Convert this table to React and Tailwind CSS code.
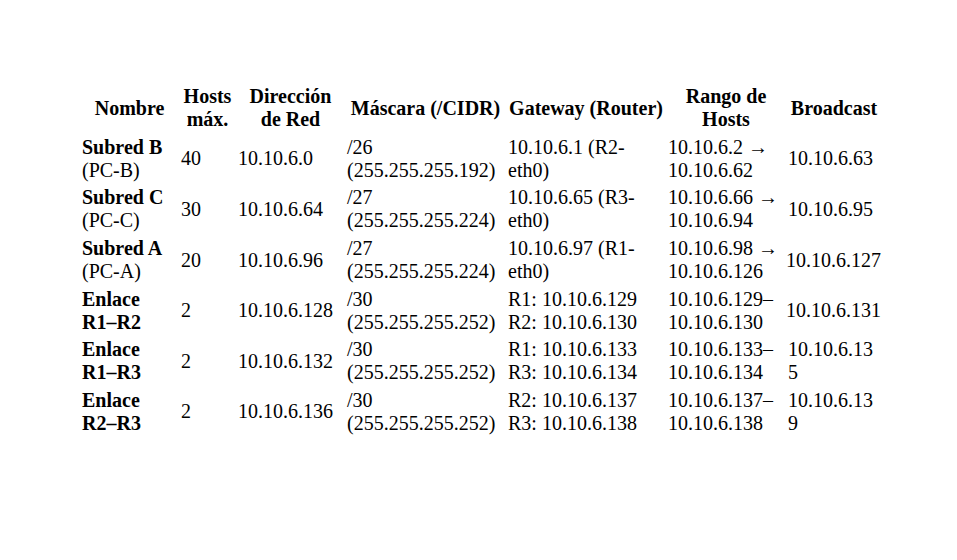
import React from "react";

const headers = [
  ["Nombre"],
  ["Hosts", "máx."],
  ["Dirección", "de Red"],
  ["Máscara (/CIDR)"],
  ["Gateway (Router)"],
  ["Rango de", "Hosts"],
  ["Broadcast"],
];

const rows = [
  {
    name: ["Subred B", "(PC-B)"], nameBold: false, hosts: "40", net: "10.10.6.0",
    mask: ["/26", "(255.255.255.192)"], gw: ["10.10.6.1 (R2-", "eth0)"],
    range: ["10.10.6.2 →", "10.10.6.62"], bc: ["10.10.6.63"],
  },
  {
    name: ["Subred C", "(PC-C)"], nameBold: false, hosts: "30", net: "10.10.6.64",
    mask: ["/27", "(255.255.255.224)"], gw: ["10.10.6.65 (R3-", "eth0)"],
    range: ["10.10.6.66 →", "10.10.6.94"], bc: ["10.10.6.95"],
  },
  {
    name: ["Subred A", "(PC-A)"], nameBold: false, hosts: "20", net: "10.10.6.96",
    mask: ["/27", "(255.255.255.224)"], gw: ["10.10.6.97 (R1-", "eth0)"],
    range: ["10.10.6.98 →", "10.10.6.126"], bc: ["10.10.6.127"], tight: true,
  },
  {
    name: ["Enlace", "R1–R2"], nameBold: true, hosts: "2", net: "10.10.6.128",
    mask: ["/30", "(255.255.255.252)"], gw: ["R1: 10.10.6.129", "R2: 10.10.6.130"],
    range: ["10.10.6.129–", "10.10.6.130"], bc: ["10.10.6.131"], tight: true,
  },
  {
    name: ["Enlace", "R1–R3"], nameBold: true, hosts: "2", net: "10.10.6.132",
    mask: ["/30", "(255.255.255.252)"], gw: ["R1: 10.10.6.133", "R3: 10.10.6.134"],
    range: ["10.10.6.133–", "10.10.6.134"], bc: ["10.10.6.13", "5"],
  },
  {
    name: ["Enlace", "R2–R3"], nameBold: true, hosts: "2", net: "10.10.6.136",
    mask: ["/30", "(255.255.255.252)"], gw: ["R2: 10.10.6.137", "R3: 10.10.6.138"],
    range: ["10.10.6.137–", "10.10.6.138"], bc: ["10.10.6.13", "9"],
  },
];

const Lines = ({ lines }) =>
  lines.map((l, i) => (
    <span key={i} className="block whitespace-nowrap">
      {l}
    </span>
  ));

const Cell = ({ children, className = "" }) => (
  <div className={`flex items-center py-[2.3px] pl-[4px] ${className}`}>
    <div>{children}</div>
  </div>
);

export default function App() {
  return (
    <div
      className="w-[957px] h-[560px] bg-white text-black pt-[83px] pl-[78px]"
      style={{ fontFamily: '"Liberation Serif", "Times New Roman", serif' }}
    >
      <div className="grid grid-cols-[99px_57px_109px_161px_160px_120px_96px] text-[20px] leading-[23px]">
        {headers.map((h, i) => (
          <Cell key={i} className="justify-center text-center font-bold">
            <Lines lines={h} />
          </Cell>
        ))}
        {rows.map((r, i) => (
          <React.Fragment key={i}>
            <Cell>
              <span className="block font-bold whitespace-nowrap">{r.name[0]}</span>
              <span className={`block whitespace-nowrap ${r.nameBold ? "font-bold" : ""}`}>
                {r.name[1]}
              </span>
            </Cell>
            <Cell>{r.hosts}</Cell>
            <Cell>{r.net}</Cell>
            <Cell>
              <Lines lines={r.mask} />
            </Cell>
            <Cell>
              <Lines lines={r.gw} />
            </Cell>
            <Cell>
              <Lines lines={r.range} />
            </Cell>
            <Cell className={r.tight ? "ml-[-2px]" : ""}>
              <Lines lines={r.bc} />
            </Cell>
          </React.Fragment>
        ))}
      </div>
    </div>
  );
}
